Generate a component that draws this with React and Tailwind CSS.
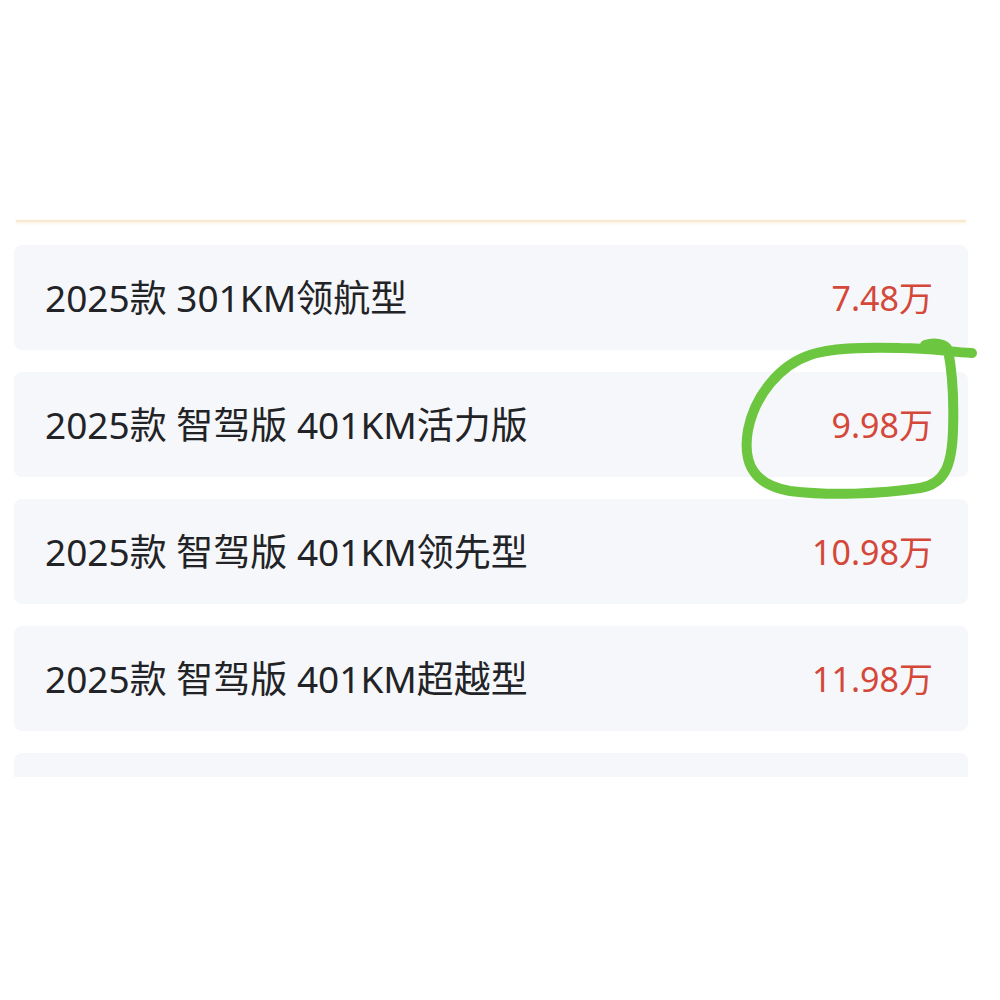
const rows = [
  { name: '2025款 301KM领航型', price: '7.48万' },
  { name: '2025款 智驾版 401KM活力版', price: '9.98万' },
  { name: '2025款 智驾版 401KM领先型', price: '10.98万' },
  { name: '2025款 智驾版 401KM超越型', price: '11.98万' },
]

export default function App() {
  return (
    <div className="relative w-[1000px] h-[1000px] bg-white overflow-hidden" style={{ fontFamily: '"Noto Sans", "Noto Sans CJK SC", sans-serif' }}>
      <div className="h-[220px]" />
      <div className="ml-[16px] mr-[34px] h-[2px] bg-[#f7ead0] shadow-[0_1px_3px_rgba(240,220,170,0.5)]" />

      <div className="mt-[23px] pl-[14px] pr-[32px] flex flex-col gap-[22px]">
        {rows.map((r) => (
          <div key={r.name} className="h-[105px] rounded-[8px] bg-[#f6f7fa] flex items-center justify-between pl-[31px] pr-[35px]">
            <span className="text-[37px] leading-none text-[#222326]">{r.name}</span>
            <span className="text-[34px] leading-none text-[#d4483a]">{r.price}</span>
          </div>
        ))}
        {/* next row, cut off by the panel edge */}
        <div className="h-[24px] rounded-t-[8px] bg-[#f6f7fa]" />
      </div>

      {/* hand-drawn annotation */}
      <svg className="absolute inset-0 pointer-events-none" width="1000" height="1000" viewBox="0 0 1000 1000">
        <path
          d="M972 353 C950 352 930 348 900 348 C860 347 830 348 810 355 C780 365 755 395 748 430 C742 465 755 485 790 491 C830 496 880 494 920 488 C945 484 952 465 953 430 C954 400 952 370 948 350 C946 344 935 342 925 345"
          fill="none"
          stroke="#6cc63f"
          strokeWidth="10"
          strokeLinecap="round"
          strokeLinejoin="round"
        />
      </svg>
    </div>
  )
}
